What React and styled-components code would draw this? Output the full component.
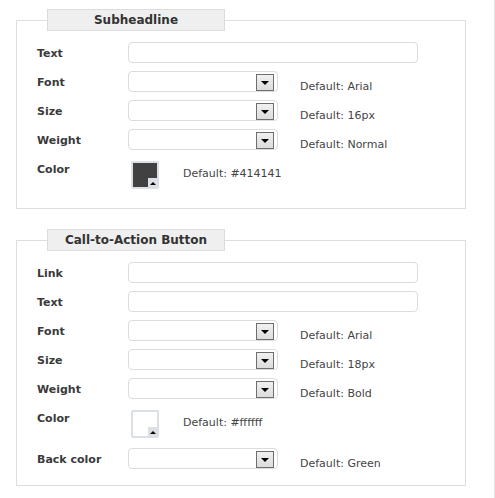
import React from 'react';
import styled, { createGlobalStyle } from 'styled-components';

const Global = createGlobalStyle`
  html, body {
    margin: 0;
    padding: 0;
    background: #fff;
  }
  body {
    font-family: "DejaVu Sans", Verdana, sans-serif;
    font-size: 11px;
    color: #333;
  }
`;

const Page = styled.div`
  width: 495px;
  min-height: 498px;
  box-sizing: border-box;
  border-right: 1px solid #e4e4e4;
  padding-top: 9px;
`;

const Section = styled.fieldset`
  width: 450px;
  box-sizing: border-box;
  margin: ${p => p.$top}px 0 0 16px;
  padding: 11px 0 ${p => p.$bottom}px 20px;
  border: 1px solid #dedede;
  min-inline-size: 0;
`;

const Legend = styled.legend`
  width: 178px;
  box-sizing: border-box;
  margin: 0 auto 0 10px;
  padding: 0;
  height: 22px;
  line-height: 20px;
  background: #efefef;
  border: 1px solid #dcdcdc;
  text-align: center;
  font-weight: bold;
  font-size: 12px;
  color: #333;
`;

const Row = styled.div`
  display: flex;
  align-items: flex-start;
  height: ${p => p.$h || 21}px;
  margin-bottom: 8px;
  &:last-child {
    margin-bottom: 0;
  }
`;

const Label = styled.div`
  width: 91px;
  flex: none;
  padding-top: ${p => p.$pt || 5}px;
  line-height: 14px;
  font-weight: bold;
  color: #3a3a3a;
`;

const Input = styled.div`
  width: ${p => p.$w}px;
  height: 21px;
  box-sizing: border-box;
  border: 1px solid #dcdcdc;
  border-radius: 4px;
  background: #fff;
  position: relative;
  flex: none;
`;

const ArrowButton = styled.div`
  position: absolute;
  right: 3px;
  top: 2px;
  width: 18px;
  height: 17px;
  box-sizing: border-box;
  border: 1px solid #6e6e6e;
  background: linear-gradient(#f0f0f0, #dcdcdc);
  display: flex;
  align-items: center;
  justify-content: center;
  &::after {
    content: '';
    border-left: 4px solid transparent;
    border-right: 4px solid transparent;
    border-top: 4px solid #000;
    margin-top: 1px;
  }
`;

const Default = styled.div`
  padding-top: 9px;
  line-height: 14px;
  margin-left: ${p => p.$ml || 22}px;
  color: #444;
`;

const Swatch = styled.div`
  width: 28px;
  height: 28px;
  box-sizing: border-box;
  margin: 3px 0 0 3px;
  border: 2px solid #dcdfe3;
  border-radius: 2px;
  background: ${p => p.$color};
  position: relative;
  flex: none;
`;

const Corner = styled.div`
  position: absolute;
  right: -1px;
  bottom: -1px;
  width: 10px;
  height: 10px;
  background: #dcdfe3;
  display: flex;
  align-items: center;
  justify-content: center;
  &::after {
    content: '';
    border-left: 3px solid transparent;
    border-right: 3px solid transparent;
    border-bottom: 3px solid #000;
  }
`;

const TextRow = ({ label }) => (
  <Row>
    <Label>{label}</Label>
    <Input $w={290} />
  </Row>
);

const SelectRow = ({ label, def }) => (
  <Row>
    <Label>{label}</Label>
    <Input $w={150}>
      <ArrowButton />
    </Input>
    <Default>Default: {def}</Default>
  </Row>
);

const ColorRow = ({ color, def }) => (
  <Row $h={33}>
    <Label $pt={5}>Color</Label>
    <Swatch $color={color}>
      <Corner />
    </Swatch>
    <Default $ml={24}>Default: {def}</Default>
  </Row>
);

export default function App() {
  return (
    <Page>
      <Global />
      <Section $top={0} $bottom={17}>
        <Legend>Subheadline</Legend>
        <TextRow label="Text" />
        <SelectRow label="Font" def="Arial" />
        <SelectRow label="Size" def="16px" />
        <SelectRow label="Weight" def="Normal" />
        <ColorRow color="#414141" def="#414141" />
      </Section>
      <Section $top={20} $bottom={16}>
        <Legend>Call-to-Action Button</Legend>
        <TextRow label="Link" />
        <TextRow label="Text" />
        <SelectRow label="Font" def="Arial" />
        <SelectRow label="Size" def="18px" />
        <SelectRow label="Weight" def="Bold" />
        <ColorRow color="#ffffff" def="#ffffff" />
        <SelectRow label="Back color" def="Green" />
      </Section>
    </Page>
  );
}
